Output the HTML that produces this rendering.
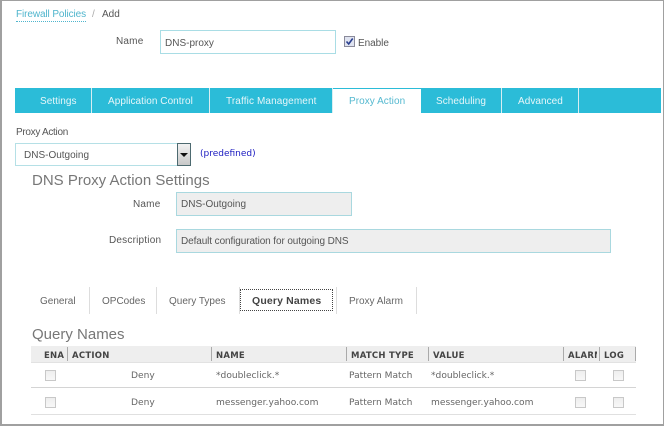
<!DOCTYPE html>
<html><head><meta charset="utf-8"><style>
html,body{margin:0;padding:0;background:#fff}
#p{position:relative;width:664px;height:426px;overflow:hidden;background:#fff;font-family:"Liberation Sans",sans-serif;font-size:10px;color:#555;filter:blur(.3px)}
#p div{position:absolute;white-space:nowrap}
.f{box-sizing:border-box;border:1px solid #b5e0e6}
.g{background:#eee;box-sizing:border-box;border:1px solid #a9d8df}
.sep{background:#d8eef2;width:1px;top:88px;height:25px}
.t{color:#e6f6f9;top:95px;font-size:10px;letter-spacing:.05px;line-height:13px}
.s{color:#666;top:295px;font-size:10px;line-height:13px}
.v{background:#ddd;width:1px;height:27px;top:287px}
.h{font-family:"DejaVu Sans",sans-serif;font-weight:bold;font-size:8.5px;color:#444;top:350px;line-height:12px;letter-spacing:.25px}
.d{font-family:"DejaVu Sans",sans-serif;font-size:9.1px;color:#666;line-height:12px}
.c{width:11px;height:11px;box-sizing:border-box;border:1px solid #c8c8c8;background:linear-gradient(#eee,#f8f8f8)}
.hs{background:#aaa;width:1px;top:347px;height:14px}
</style></head><body><div id="p">
<div style="left:0;top:0;width:664px;height:426px;box-sizing:border-box;border:1px solid #a0a0a0;border-left-width:2px;border-bottom-width:2px"></div>

<div style="left:16px;top:8px;font-size:10px;letter-spacing:-.1px;color:#4fb5cd;line-height:13px;border-bottom:1px dotted #4fb5cd">Firewall Policies</div>
<div style="left:92px;top:8px;color:#aaa;line-height:13px">/</div>
<div style="left:102px;top:8px;color:#555;line-height:13px">Add</div>

<div style="left:116px;top:35px;font-size:10px;letter-spacing:.2px;line-height:13px">Name</div>
<div class="f" style="left:160px;top:30px;width:176px;height:24px;border-color:#a9dde5"></div>
<div style="left:165px;top:37px;line-height:13px;font-size:10px">DNS-proxy</div>
<div style="left:344px;top:36px;width:11px;height:11px;box-sizing:border-box;border:1px solid #8a8a9a;background:#dfe3f0"></div>
<svg style="position:absolute;left:344px;top:36px" width="11" height="11"><path d="M2.5 5.5 L4.7 8 L8.7 2.5" fill="none" stroke="#2a3f8f" stroke-width="1.6"/></svg>
<div style="left:358px;top:37px;line-height:13px;font-size:10px;letter-spacing:-.05px">Enable</div>

<div style="left:15px;top:88px;width:646px;height:25px;background:#2bbcd8"></div>
<div class="sep" style="left:91px"></div>
<div class="sep" style="left:209px"></div>
<div class="sep" style="left:332px"></div>
<div style="left:333px;top:89px;width:88px;height:25px;background:#fff"></div>
<div class="sep" style="left:501px"></div>
<div class="sep" style="left:578px"></div>
<div class="t" style="left:40px">Settings</div>
<div class="t" style="left:108px">Application Control</div>
<div class="t" style="left:226px;letter-spacing:.12px">Traffic Management</div>
<div class="t" style="left:349px;top:95px;color:#55b9d0">Proxy Action</div>
<div class="t" style="left:436px">Scheduling</div>
<div class="t" style="left:518px">Advanced</div>

<div style="left:16px;top:126px;line-height:13px;font-size:10px;letter-spacing:-.3px;color:#555">Proxy Action</div>
<div class="f" style="left:15px;top:143px;width:164px;height:23px"></div>
<div style="left:24px;top:149px;line-height:13px;font-size:10px;color:#555">DNS-Outgoing</div>
<div style="left:177px;top:143px;width:14px;height:23px;box-sizing:border-box;border:1px solid #4d6a70;background:linear-gradient(#f2f2f2,#c8c8c8)"></div>
<div style="left:180px;top:153px;width:0;height:0;border-left:4px solid transparent;border-right:4px solid transparent;border-top:4px solid #111"></div>
<div style="left:200px;top:148px;line-height:13px;font-family:'DejaVu Sans',sans-serif;font-size:9px;color:#1a1ac0">(predefined)</div>

<div style="left:32px;top:172px;font-size:15px;color:#777;line-height:18px">DNS Proxy Action Settings</div>
<div style="left:133px;top:198px;line-height:13px;font-size:10px;letter-spacing:.2px">Name</div>
<div class="g" style="left:176px;top:192px;width:176px;height:24px"></div>
<div style="left:181px;top:198px;line-height:13px;font-size:10px">DNS-Outgoing</div>
<div style="left:109px;top:234px;line-height:13px;font-size:10px;letter-spacing:.2px">Description</div>
<div class="g" style="left:176px;top:229px;width:435px;height:24px"></div>
<div style="left:181px;top:235px;line-height:13px;font-size:10px;letter-spacing:-.1px">Default configuration for outgoing DNS</div>

<div class="s" style="left:40px">General</div>
<div class="v" style="left:89px"></div>
<div class="s" style="left:102px">OPCodes</div>
<div class="v" style="left:156px"></div>
<div class="s" style="left:169px">Query Types</div>
<div class="v" style="left:239px"></div>
<div style="left:240px;top:289px;width:93px;height:22px;box-sizing:border-box;border:1px dotted #444"></div>
<div class="s" style="left:252px;font-weight:bold;color:#444;font-size:10.5px;letter-spacing:.15px">Query Names</div>
<div class="v" style="left:336px"></div>
<div class="s" style="left:349px">Proxy Alarm</div>
<div class="v" style="left:416px"></div>

<div style="left:32px;top:326px;font-size:15px;color:#777;line-height:18px">Query Names</div>
<div style="left:31px;top:346px;width:605px;height:16px;background:#eee;border-bottom:1px solid #e2e2e2"></div>
<div class="hs" style="left:67px"></div>
<div class="hs" style="left:211px"></div>
<div class="hs" style="left:346px"></div>
<div class="hs" style="left:428px"></div>
<div class="hs" style="left:563px"></div>
<div class="hs" style="left:599px"></div>
<div class="hs" style="left:635px"></div>
<div class="h" style="left:44px">ENA</div>
<div class="h" style="left:72px">ACTION</div>
<div class="h" style="left:216px">NAME</div>
<div class="h" style="left:351px">MATCH TYPE</div>
<div class="h" style="left:433px">VALUE</div>
<div class="h" style="left:568px;width:29px;overflow:hidden">ALARM</div>
<div class="h" style="left:604px">LOG</div>

<div class="c" style="left:45px;top:370px"></div>
<div class="d" style="left:131px;top:370px">Deny</div>
<div class="d" style="left:216px;top:370px">*doubleclick.*</div>
<div class="d" style="left:349px;top:370px">Pattern Match</div>
<div class="d" style="left:431px;top:370px">*doubleclick.*</div>
<div class="c" style="left:575px;top:370px"></div>
<div class="c" style="left:613px;top:370px"></div>
<div style="left:31px;top:387px;width:605px;height:1px;background:#d4d4d4"></div>

<div class="c" style="left:45px;top:397px"></div>
<div class="d" style="left:131px;top:397px">Deny</div>
<div class="d" style="left:216px;top:397px">messenger.yahoo.com</div>
<div class="d" style="left:349px;top:397px">Pattern Match</div>
<div class="d" style="left:431px;top:397px">messenger.yahoo.com</div>
<div class="c" style="left:575px;top:397px"></div>
<div class="c" style="left:613px;top:397px"></div>
<div style="left:31px;top:414px;width:605px;height:1px;background:#e0e0e0"></div>
</div></body></html>
